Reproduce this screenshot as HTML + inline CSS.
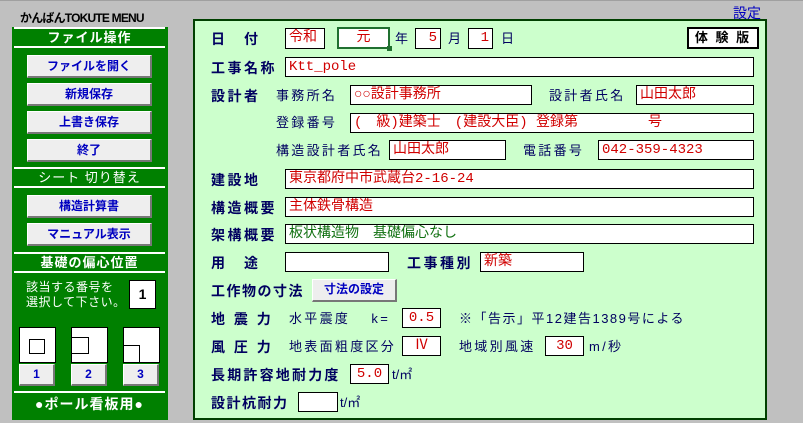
<!DOCTYPE html>
<html><head><meta charset="utf-8"><style>
*{margin:0;padding:0;box-sizing:border-box}
body{width:803px;height:423px;background:#c0c0c0;position:relative;overflow:hidden;font-family:"Liberation Sans","Noto Sans CJK JP",sans-serif;}
.a{position:absolute;white-space:nowrap}
.g{position:absolute;background:#008000}
.hd{position:absolute;left:14px;width:151px;background:#008000;color:#fff;font-weight:bold;font-size:13px;text-align:center;border-top:2px solid #fff;border-bottom:2px solid #fff;letter-spacing:1px}
.btn{position:absolute;background:#eeeeee;border:1px solid #fff;border-right:2px solid #777;border-bottom:2px solid #777;color:#0000c0;font-weight:bold;font-size:12px;text-align:center}
.lb{position:absolute;font-weight:bold;color:#000060;font-size:14px;letter-spacing:2.5px;white-space:nowrap;line-height:16px}
.tx{position:absolute;color:#000060;font-size:13px;letter-spacing:2.3px;white-space:nowrap;line-height:16px}
.bx{position:absolute;background:#fff;border:1px solid #000;color:#d00000;font-family:"Liberation Mono","Noto Sans CJK JP",monospace;font-size:14px;line-height:18px;padding-left:3px;white-space:nowrap;overflow:hidden}
.c{text-align:center;padding-left:0}
</style></head><body>
<div style="position:absolute;left:0;top:0;width:803px;height:1px;background:#a0a0a0"></div>
<div class="a" style="left:20px;top:9px;font-size:12px;font-weight:bold;color:#000;letter-spacing:-0.8px">かんばんTOKUTE MENU</div>
<div class="a" style="left:733px;top:3px;font-size:14px;color:#0000c0">設定</div>

<div class="g" style="left:12px;top:27px;width:156px;height:393px"></div>
<div class="hd" style="top:27px;height:21px;line-height:17px">ファイル操作</div>
<div class="btn" style="left:27px;top:55px;width:125px;height:23px;line-height:20px">ファイルを開く</div>
<div class="btn" style="left:27px;top:83px;width:125px;height:23px;line-height:20px">新規保存</div>
<div class="btn" style="left:27px;top:111px;width:125px;height:23px;line-height:20px">上書き保存</div>
<div class="btn" style="left:27px;top:139px;width:125px;height:23px;line-height:20px">終了</div>
<div class="hd" style="top:167px;height:21px;line-height:17px;font-weight:normal">シート 切り替え</div>
<div class="btn" style="left:27px;top:195px;width:125px;height:23px;line-height:20px">構造計算書</div>
<div class="btn" style="left:27px;top:223px;width:125px;height:23px;line-height:20px">マニュアル表示</div>
<div class="hd" style="top:252px;height:21px;line-height:17px">基礎の偏心位置</div>
<div class="a" style="left:26px;top:280px;color:#fff;font-size:12px;line-height:15px;letter-spacing:0.5px">該当する番号を<br>選択して下さい。</div>
<div class="a" style="left:129px;top:280px;width:27px;height:29px;background:#fff;border:1px solid #000;font-size:14px;font-weight:bold;text-align:center;line-height:27px;color:#000">1</div>
<div class="a" style="left:19px;top:327px;width:37px;height:36px;background:#fff;border:1px solid #000"></div>
<div class="a" style="left:29px;top:339px;width:16px;height:15px;border:1px solid #000"></div>
<div class="a" style="left:71px;top:327px;width:37px;height:36px;background:#fff;border:1px solid #000"></div>
<div class="a" style="left:71px;top:337px;width:18px;height:17px;border:1px solid #000"></div>
<div class="a" style="left:123px;top:327px;width:37px;height:36px;background:#fff;border:1px solid #000"></div>
<div class="a" style="left:123px;top:345px;width:17px;height:18px;border:1px solid #000"></div>
<div class="btn" style="left:19px;top:364px;width:36px;height:22px;line-height:19px">1</div>
<div class="btn" style="left:71px;top:364px;width:36px;height:22px;line-height:19px">2</div>
<div class="btn" style="left:123px;top:364px;width:36px;height:22px;line-height:19px">3</div>
<div class="hd" style="top:391px;height:27px;line-height:23px;font-size:14px;border-bottom:none">●ポール看板用●</div>

<div class="a" style="left:193px;top:19px;width:574px;height:401px;background:#ccffcc;border:2px solid #004000"></div>

<div class="lb" style="left:211px;top:31px">日　付</div>
<div class="bx" style="left:285px;top:28px;width:40px;height:21px">令和</div>
<div class="bx c" style="left:337px;top:27px;width:53px;height:22px;border:2px solid #207030">元</div>
<div class="a" style="left:387px;top:46px;width:5px;height:5px;background:#207030"></div>
<div class="tx" style="left:395px;top:31px">年</div>
<div class="bx" style="left:415px;top:28px;width:26px;height:21px;text-align:right;padding-right:3px">5</div>
<div class="tx" style="left:448px;top:31px">月</div>
<div class="bx" style="left:468px;top:28px;width:25px;height:21px;text-align:right;padding-right:3px">1</div>
<div class="tx" style="left:501px;top:31px">日</div>
<div class="a" style="left:687px;top:27px;width:72px;height:22px;background:#fff;border:2px solid #000;font-weight:bold;font-size:13px;text-align:center;line-height:18px;letter-spacing:2px">体 験 版</div>

<div class="lb" style="left:211px;top:60px">工事名称</div>
<div class="bx" style="left:285px;top:57px;width:469px;height:20px">Ktt_pole</div>

<div class="lb" style="left:211px;top:88px">設計者</div>
<div class="tx" style="left:276px;top:88px">事務所名</div>
<div class="bx" style="left:350px;top:85px;width:182px;height:20px">○○設計事務所</div>
<div class="tx" style="left:549px;top:88px">設計者氏名</div>
<div class="bx" style="left:636px;top:85px;width:118px;height:20px">山田太郎</div>

<div class="tx" style="left:276px;top:115px">登録番号</div>
<div class="bx" style="left:350px;top:113px;width:404px;height:20px">(　級)建築士　(建設大臣) 登録第　　　　　号</div>

<div class="tx" style="left:276px;top:143px">構造設計者氏名</div>
<div class="bx" style="left:389px;top:140px;width:117px;height:20px">山田太郎</div>
<div class="tx" style="left:523px;top:143px">電話番号</div>
<div class="bx" style="left:598px;top:140px;width:156px;height:20px">042-359-4323</div>

<div class="lb" style="left:211px;top:172px">建設地</div>
<div class="bx" style="left:285px;top:169px;width:469px;height:20px">東京都府中市武蔵台2-16-24</div>
<div class="lb" style="left:211px;top:200px">構造概要</div>
<div class="bx" style="left:285px;top:197px;width:469px;height:20px">主体鉄骨構造</div>
<div class="lb" style="left:211px;top:227px">架構概要</div>
<div class="bx" style="left:285px;top:224px;width:469px;height:20px;color:#107010">板状構造物　基礎偏心なし</div>

<div class="lb" style="left:211px;top:255px">用　途</div>
<div class="bx" style="left:285px;top:252px;width:104px;height:20px"></div>
<div class="lb" style="left:407px;top:255px">工事種別</div>
<div class="bx" style="left:480px;top:252px;width:104px;height:20px">新築</div>

<div class="lb" style="left:211px;top:283px;letter-spacing:1.5px">工作物の寸法</div>
<div class="btn" style="left:312px;top:279px;width:85px;height:23px;line-height:19px;font-size:12px">寸法の設定</div>

<div class="lb" style="left:211px;top:311px">地 震 力</div>
<div class="tx" style="left:289px;top:311px">水平震度　 k=</div>
<div class="bx c" style="left:402px;top:308px;width:39px;height:20px">0.5</div>
<div class="tx" style="left:459px;top:311px;letter-spacing:1.5px">※「告示」平12建告1389号による</div>

<div class="lb" style="left:211px;top:339px">風 圧 力</div>
<div class="tx" style="left:289px;top:339px">地表面粗度区分</div>
<div class="bx c" style="left:402px;top:336px;width:39px;height:20px">Ⅳ</div>
<div class="tx" style="left:459px;top:339px">地域別風速</div>
<div class="bx c" style="left:545px;top:336px;width:39px;height:20px">30</div>
<div class="tx" style="left:589px;top:339px">m/秒</div>

<div class="lb" style="left:211px;top:367px;letter-spacing:2.2px">長期許容地耐力度</div>
<div class="bx c" style="left:350px;top:364px;width:39px;height:20px">5.0</div>
<div class="tx" style="left:392px;top:367px;letter-spacing:0">t/㎡</div>

<div class="lb" style="left:211px;top:395px;letter-spacing:1.5px">設計杭耐力</div>
<div class="bx" style="left:298px;top:392px;width:40px;height:20px"></div>
<div class="tx" style="left:340px;top:395px;letter-spacing:0">t/㎡</div>
</body></html>
